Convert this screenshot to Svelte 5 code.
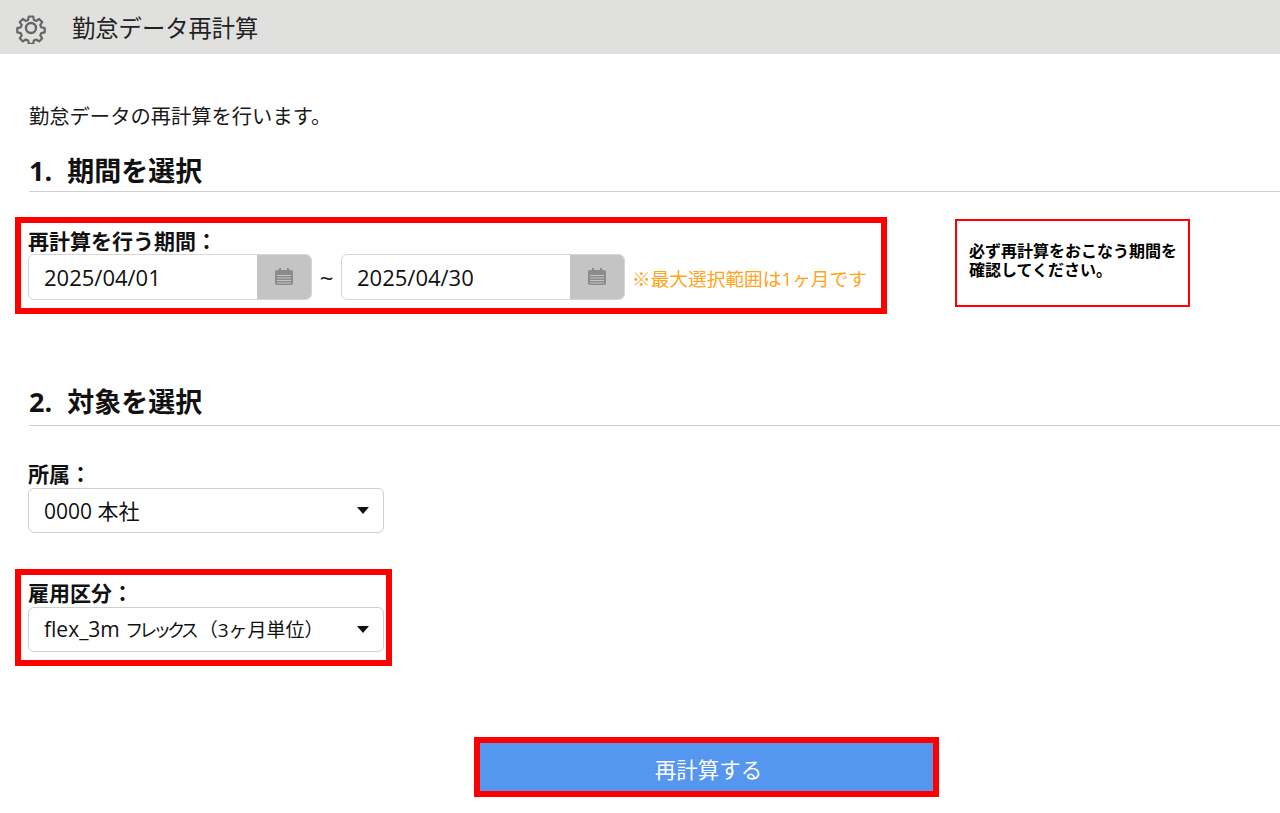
<script>
  const ranges = ['2025/04/01', '2025/04/30'];
</script>

<div class="page">
  <header class="top-bar">
    <svg class="gear" viewBox="0 0 32 32" width="32" height="32" aria-hidden="true">
      <path
        d="M13.6 3.5h4.8l.7 3.7 2.6 1.1 3.1-2.1 3.4 3.4-2.1 3.1 1.1 2.6 3.7.7v4.8l-3.7.7-1.1 2.6 2.1 3.1-3.4 3.4-3.1-2.1-2.6 1.1-.7 3.700h-4.8l-.7-3.7-2.6-1.1-3.1 2.1-3.4-3.4 2.1-3.1-1.1-2.6-3.7-.7v-4.8l3.7-.7 1.1-2.6-2.1-3.1 3.4-3.4 3.1 2.1 2.6-1.1z"
        transform="translate(16 16) scale(.92) translate(-16 -16)"
        fill="none"
        stroke="#666"
        stroke-width="2.4"
        stroke-linejoin="round"
      />
      <circle cx="16" cy="16" r="5" fill="none" stroke="#666" stroke-width="2.4" />
    </svg>
    <h1>勤怠データ再計算</h1>
  </header>

  <main>
    <p class="lead">勤怠データの再計算を行います。</p>

    <h2>1. 期間を選択</h2>
    <div class="period-row">
      <div class="mark period">
        <div class="field-label">再計算を行う期間：</div>
        <div class="dates">
          {#each ranges as date, i}
            {#if i > 0}<span class="tilde">~</span>{/if}
            <div class="date-input">
              <span class="value">{date}</span>
              <span class="cal-btn">
                <svg viewBox="0 0 20 20" width="20" height="20" aria-hidden="true">
                  <rect x="5" y="1" width="2" height="4" fill="#8b8b8b" />
                  <rect x="13" y="1" width="2" height="4" fill="#8b8b8b" />
                  <rect x="1" y="3" width="18" height="15" rx="2" fill="#8b8b8b" />
                  <path d="M3 8.5h14M3 11h14M3 13.500h14M3 16h14" stroke="#c4c4c4" stroke-width="1" />
                </svg>
              </span>
            </div>
          {/each}
          <span class="hint">※最大選択範囲は1ヶ月です</span>
        </div>
      </div>
      <div class="note">必ず再計算をおこなう期間を<br />確認してください。</div>
    </div>

    <h2 class="second">2. 対象を選択</h2>

    <div class="plain-field">
      <div class="field-label">所属：</div>
      <div class="select"><span>0000 本社</span><i class="caret"></i></div>
    </div>

    <div class="mark employment">
      <div class="field-label">雇用区分：</div>
      <div class="select"><span>flex_3m <span class="narrow">フレックス</span><span class="unit">（3ヶ月単位）</span></span><i class="caret"></i></div>
    </div>

    <div class="actions">
      <div class="mark submit-mark">
        <button type="button" class="submit">再計算する</button>
      </div>
    </div>
  </main>
</div>

<style>
  :global(body) {
    margin: 0;
    background: #fff;
  }

  .page {
    height: 813px;
    overflow: hidden;
    color: #1a1a1a;
    font-family: "Open Sans", "Noto Sans CJK JP", sans-serif;
  }

  .top-bar {
    height: 54px;
    display: flex;
    align-items: center;
    padding-left: 15px;
    background: #e0e0de;
  }

  .gear {
    flex: none;
    margin-top: 1px;
  }

  h1 {
    margin: 4px 0 0 25px;
    font-size: 23.3px;
    font-weight: 400;
    color: #222;
    line-height: 1;
  }

  main {
    padding-left: 15px;
  }

  .lead {
    margin: 48px 0 0 14px;
    font-size: 20.3px;
    line-height: 28px;
  }

  h2 {
    margin: 25px 0 0 14px;
    height: 36px;
    border-bottom: 1px solid #cfcfcf;
    font-size: 27px;
    font-weight: 700;
    line-height: 32px;
    word-spacing: 8px;
    color: #111;
  }

  h2.second {
    margin-top: 72px;
    height: 39px;
  }

  .period-row {
    display: flex;
    align-items: flex-start;
    margin-top: 25px;
  }

  .mark {
    box-sizing: border-box;
    border: 6px solid #f00;
    background: #fff;
  }

  .period {
    width: 872px;
    height: 97px;
    padding: 6px 0 0 7px;
  }

  .field-label {
    font-size: 21px;
    font-weight: 700;
    line-height: 24px;
    color: #111;
  }

  .dates {
    display: flex;
    align-items: center;
    margin-top: 1px;
  }

  .date-input {
    box-sizing: border-box;
    width: 284px;
    height: 46px;
    display: flex;
    align-items: center;
    justify-content: space-between;
    border: 1px solid #d6d6d6;
    border-radius: 6px;
    overflow: hidden;
  }

  .value {
    padding-left: 15px;
    font-size: 22px;
    color: #111;
  }

  .cal-btn {
    width: 54px;
    height: 46px;
    display: flex;
    align-items: center;
    justify-content: center;
    background: #c4c4c4;
  }

  .tilde {
    width: 29px;
    text-align: center;
    font-size: 24px;
  }

  .hint {
    margin-left: 7px;
    font-size: 18.7px;
    color: #ffa31a;
    white-space: nowrap;
  }

  .note {
    box-sizing: border-box;
    width: 235px;
    height: 88px;
    margin: 2px 0 0 68px;
    padding: 21px 0 0 12px;
    border: 2px solid #f00;
    font-size: 16px;
    font-weight: 700;
    line-height: 19px;
    color: #000;
  }

  .plain-field {
    margin: 36px 0 0 13px;
  }

  .select {
    box-sizing: border-box;
    width: 356px;
    height: 45px;
    display: flex;
    align-items: center;
    justify-content: space-between;
    margin-top: 2px;
    padding: 0 14px 2px 15px;
    border: 1px solid #cfcfcf;
    border-radius: 6px;
    font-size: 21px;
    color: #111;
    background: #fff;
  }

  .narrow {
    font-size: 18px;
    letter-spacing: -4px;
    margin-right: 4px;
  }

  .unit {
    font-size: 19px;
  }

  .caret {
    width: 0;
    height: 0;
    margin-top: 2px;
    border-left: 6px solid transparent;
    border-right: 6px solid transparent;
    border-top: 7px solid #111;
  }

  .employment {
    width: 377px;
    height: 97px;
    margin-top: 36px;
    padding: 6px 0 0 7px;
  }

  .actions {
    display: flex;
    margin: 71px 0 0 459px;
  }

  .submit-mark {
    width: 465px;
    height: 60px;
  }

  .submit {
    display: block;
    width: 100%;
    height: 100%;
    padding: 2px 0 0 4px;
    border: 0;
    background: #5596ef;
    color: #fff;
    font: inherit;
    font-size: 21.5px;
  }
</style>
